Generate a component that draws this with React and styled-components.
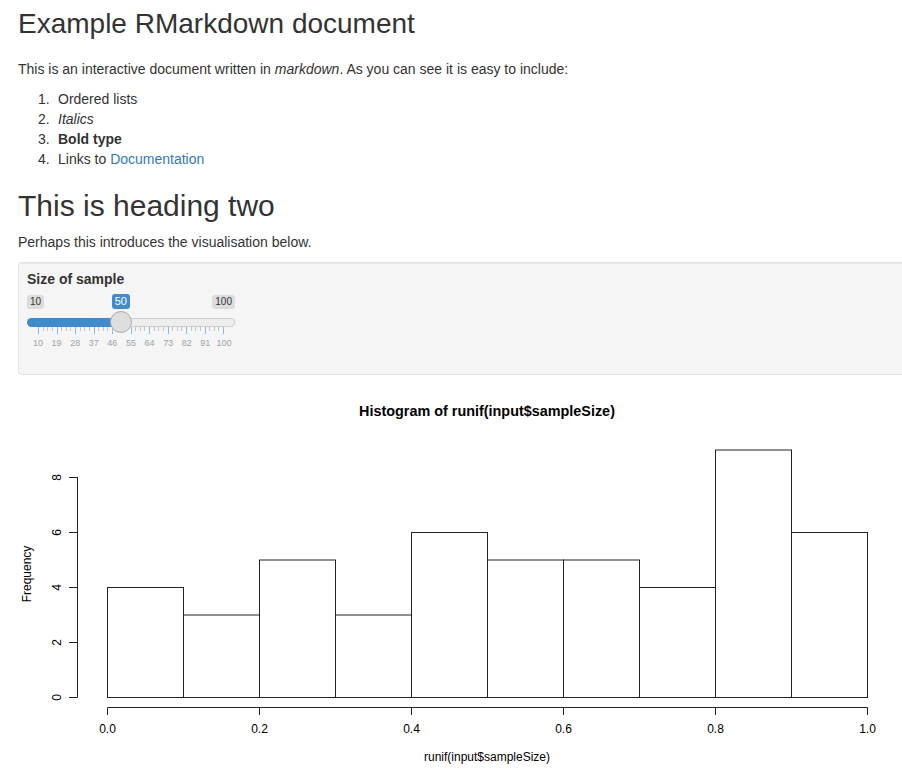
import React from 'react';
import styled, { createGlobalStyle } from 'styled-components';

const GlobalStyle = createGlobalStyle`
  html, body {
    margin: 0;
    padding: 0;
    overflow: hidden;
    background: #fff;
  }
  body {
    font-family: "Liberation Sans", Arial, Helvetica, sans-serif;
    font-size: 14px;
    line-height: 20px;
    color: #333;
  }
`;

const Page = styled.div`
  width: 910px;
  padding-left: 18px;
`;

const Title = styled.h1`
  font-size: 28px;
  font-weight: 400;
  line-height: 1.1;
  margin: 9px 0 19px;
`;

const Heading = styled.h2`
  font-size: 30px;
  font-weight: 400;
  line-height: 1.1;
  margin: 20px 0 10px;
`;

const Para = styled.p`
  margin: 0 0 10px;
`;

const List = styled.ol`
  margin: 0 0 10px;
  padding-left: 40px;
  list-style: none;
  counter-reset: item;
`;

const Item = styled.li`
  counter-increment: item;
  &::before {
    content: counter(item) ".";
    display: inline-block;
    width: 20px;
    margin-left: -20px;
    font-weight: 400;
    font-style: normal;
  }
`;

const Link = styled.a`
  color: #337ab7;
  text-decoration: none;
`;

const Well = styled.div`
  background: #f5f5f5;
  border: 1px solid #e3e3e3;
  border-right: none;
  border-radius: 4px 0 0 4px;
  box-shadow: inset 0 1px 1px rgba(0, 0, 0, 0.05);
  padding: 6px 0 26px 8px;
`;

const Label = styled.div`
  font-weight: 700;
  margin-bottom: 5px;
`;

/* ion.rangeSlider, "shiny" skin */
const Slider = styled.div`
  position: relative;
  width: 208px;
`;

const TagRow = styled.div`
  display: flex;
  justify-content: space-between;
  align-items: flex-start;
  height: 15px;
  padding-top: 1px;
  box-sizing: border-box;
`;

const Tag = styled.span`
  font-size: 10px;
  line-height: 12px;
  padding: 1px 3px;
  border-radius: 3px;
  color: #333;
  background: rgba(0, 0, 0, 0.1);
`;

const SingleTag = styled.span`
  position: absolute;
  top: 0;
  font-size: 11px;
  line-height: 13px;
  padding: 1px 3px;
  border-radius: 3px;
  color: #fff;
  background: #428bca;
`;

const Track = styled.div`
  display: flex;
  height: 9px;
  margin-top: 9px;
`;

const Fill = styled.div`
  background: #428bca;
  border-radius: 8px 0 0 8px;
`;

const Rest = styled.div`
  flex: 1;
  background: #ededed;
  border: 1px solid #ccc;
  border-left: none;
  border-radius: 0 8px 8px 0;
`;

const Handle = styled.div`
  position: absolute;
  top: 17px;
  width: 22px;
  height: 22px;
  box-sizing: border-box;
  border-radius: 50%;
  background: #dedede;
  border: 1px solid #ababab;
  box-shadow: 1px 1px 3px rgba(255, 255, 255, 0.3);
`;

const Grid = styled.div`
  display: flex;
  height: 7px;
  margin: 0 11px 0 11px;
  border-right: 1px solid #8fb7dd;
`;

const Segment = styled.div`
  flex: 1;
  display: flex;
  justify-content: space-evenly;
  align-items: flex-start;
  border-left: 1px solid #8fb7dd;
`;

const SmallTick = styled.span`
  width: 1px;
  height: 4px;
  background: #c4c4c4;
`;

const GridLabels = styled.div`
  display: flex;
  width: 204.6px;
  margin: 4px 0 0 1.7px;
`;

const GridText = styled.span`
  flex: 1;
  text-align: center;
  font-size: 9px;
  line-height: 10px;
  color: #99a4ac;
`;

const Plot = styled.svg`
  display: block;
  margin: 4px 0 0 -18px;
  font-family: "Liberation Sans", Arial, Helvetica, sans-serif;
`;

const min = 10;
const max = 100;
const value = 50;
const pad = 11;
const inner = 208 - pad * 2;
const pos = (v) => pad + ((v - min) / (max - min)) * inner;
const majors = Array.from({ length: 11 }, (_, i) => min + i * 9);

function SizeSlider() {
  const x = pos(value);
  return (
    <Slider>
      <TagRow>
        <Tag>{min}</Tag>
        <Tag>{max}</Tag>
      </TagRow>
      <SingleTag style={{ left: x - 9 }}>{value}</SingleTag>
      <Track>
        <Fill style={{ width: x }} />
        <Rest />
      </Track>
      <Handle style={{ left: x - 11 }} />
      <Grid>
        {majors.slice(1).map((m) => (
          <Segment key={m}>
            <SmallTick />
            <SmallTick />
            <SmallTick />
          </Segment>
        ))}
      </Grid>
      <GridLabels>
        {majors.map((m) => (
          <GridText key={m}>{m}</GridText>
        ))}
      </GridLabels>
    </Slider>
  );
}

const counts = [4, 3, 5, 3, 6, 5, 5, 4, 9, 6];
const x0 = 107;
const bw = 76;
const y0 = 318;
const unit = 27.5;

function Histogram() {
  return (
    <Plot width="910" height="400" viewBox="0 0 910 400">
      <text x="487" y="37" textAnchor="middle" fontSize="14.4" fontWeight="700" fill="#000">
        Histogram of runif(input$sampleSize)
      </text>
      <g fill="#fff" stroke="#222" strokeWidth="1">
        {counts.map((c, i) => (
          <rect key={i} x={x0 + i * bw + 0.5} y={y0 - c * unit + 0.5} width={bw} height={c * unit} />
        ))}
      </g>
      <g stroke="#222" strokeWidth="1">
        <line x1="77.5" y1="98" x2="77.5" y2="318.5" />
        {[0, 2, 4, 6, 8].map((v) => (
          <line key={v} x1="69" y1={y0 - v * unit + 0.5} x2="77.5" y2={y0 - v * unit + 0.5} />
        ))}
        <line x1="107.5" y1="328.5" x2="867.5" y2="328.5" />
        {[0, 0.2, 0.4, 0.6, 0.8, 1].map((v) => (
          <line key={v} x1={x0 + v * 760 + 0.5} y1="328.5" x2={x0 + v * 760 + 0.5} y2="336" />
        ))}
      </g>
      <g fontSize="12" fill="#000" textAnchor="middle">
        {[0, 2, 4, 6, 8].map((v) => (
          <text key={v} transform={`translate(61 ${y0 - v * unit + 0.5}) rotate(-90)`}>{v}</text>
        ))}
        {['0.0', '0.2', '0.4', '0.6', '0.8', '1.0'].map((t, i) => (
          <text key={t} x={x0 + i * 152 + 0.5} y="354">{t}</text>
        ))}
        <text x="487" y="382">runif(input$sampleSize)</text>
        <text transform="translate(31 195) rotate(-90)">Frequency</text>
      </g>
    </Plot>
  );
}

export default function App() {
  return (
    <>
      <GlobalStyle />
      <Page>
        <Title>Example RMarkdown document</Title>
        <Para>
          This is an interactive document written in <em>markdown</em>. As you can see it is easy to include:
        </Para>
        <List>
          <Item>Ordered lists</Item>
          <Item><em>Italics</em></Item>
          <Item><strong>Bold type</strong></Item>
          <Item>Links to <Link href="#">Documentation</Link></Item>
        </List>
        <Heading>This is heading two</Heading>
        <Para>Perhaps this introduces the visualisation below.</Para>
        <Well>
          <Label>Size of sample</Label>
          <SizeSlider />
        </Well>
        <Histogram />
      </Page>
    </>
  );
}
